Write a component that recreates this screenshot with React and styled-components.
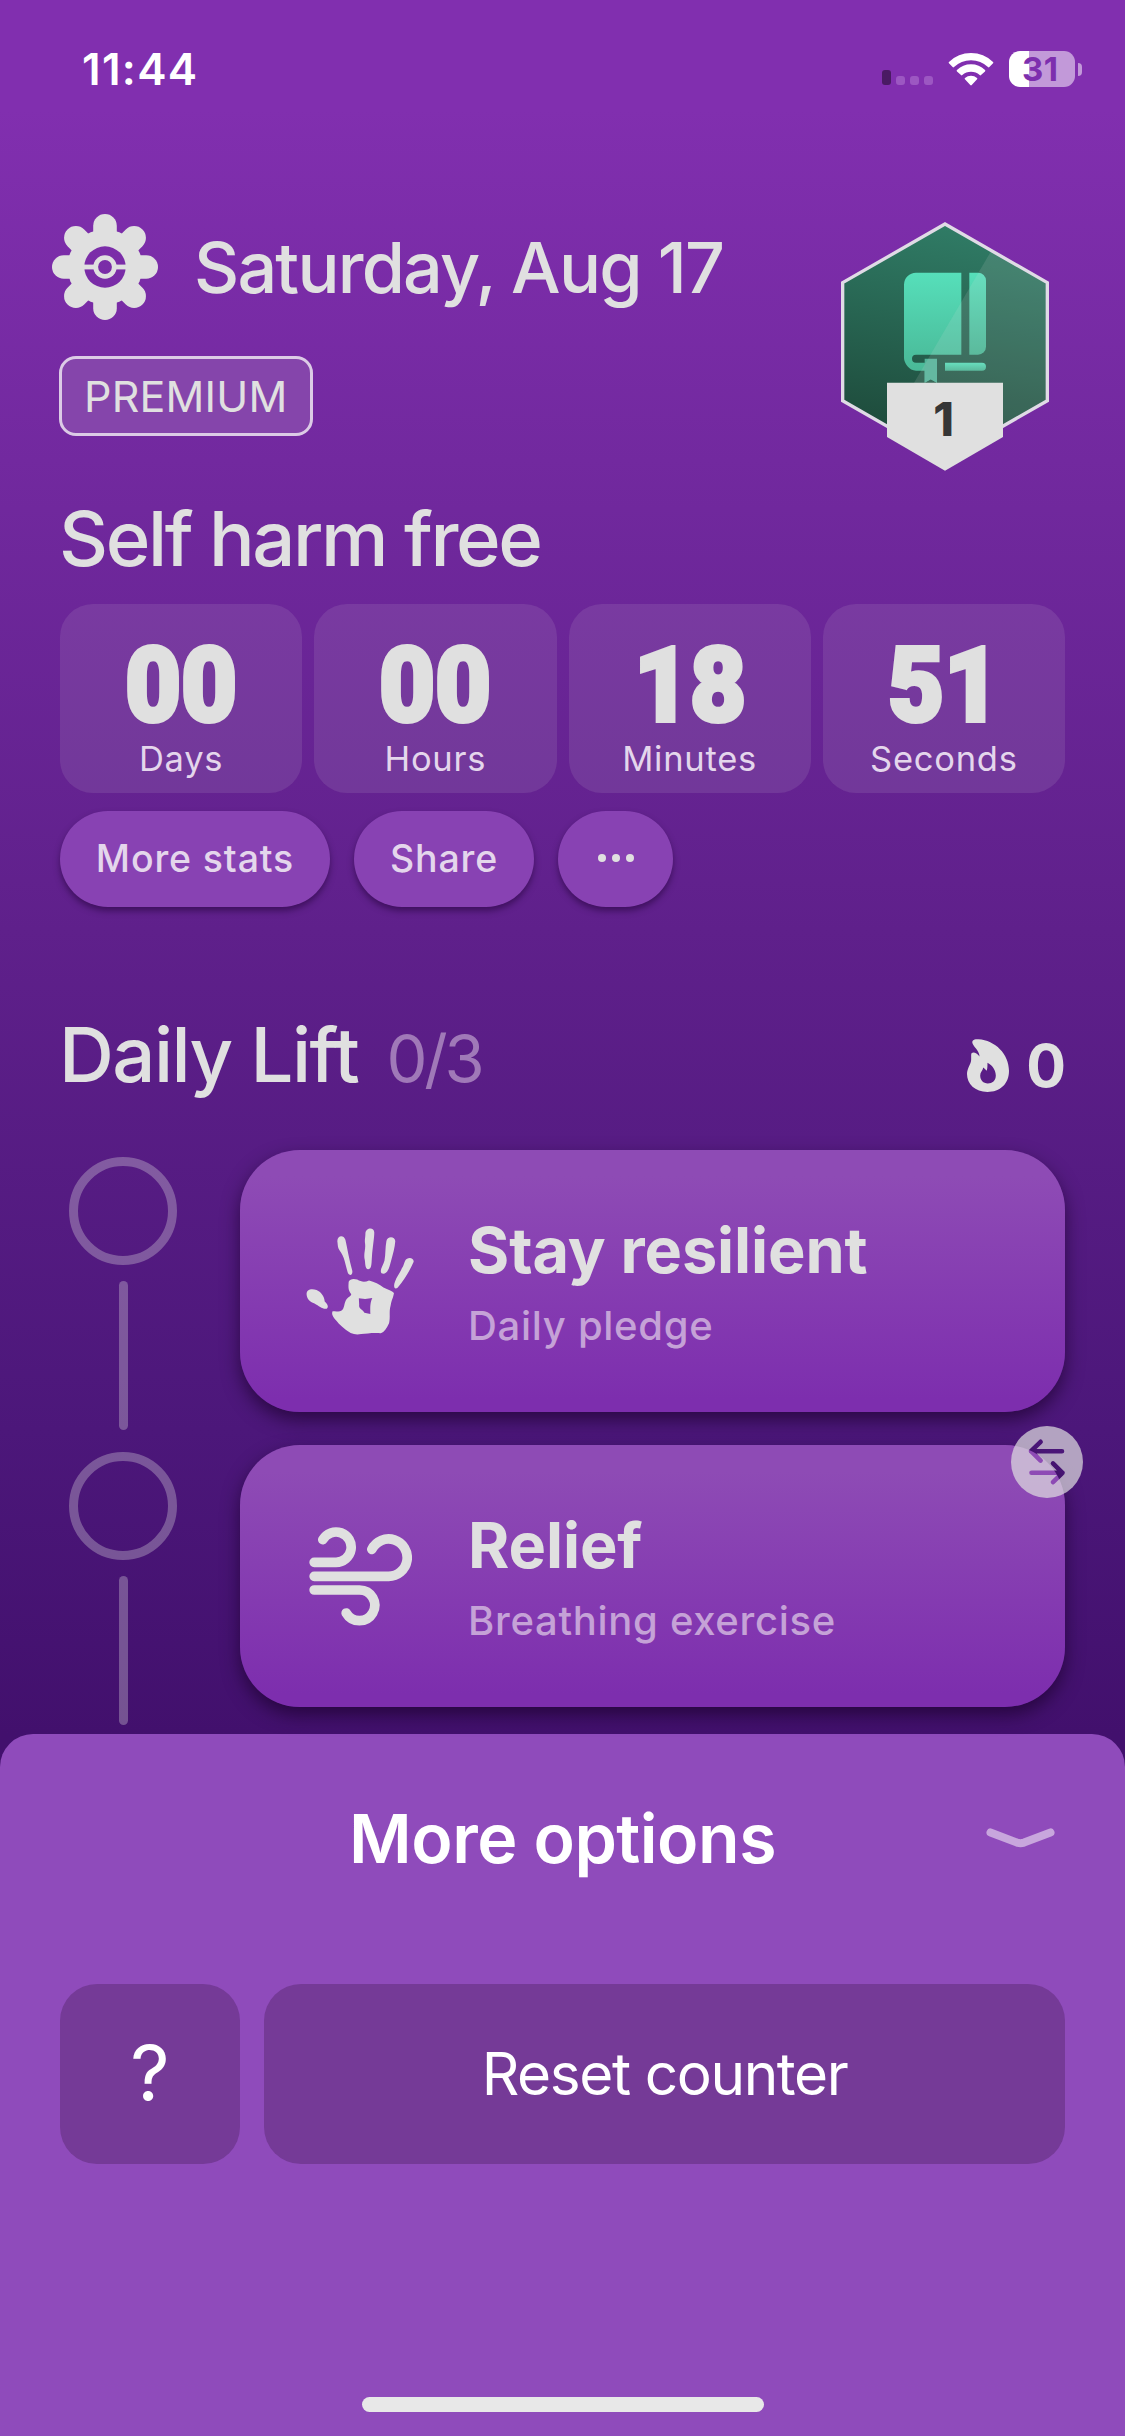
import React from 'react';
import styled, { createGlobalStyle } from 'styled-components';

const INK = '#e0e0e0';

const GlobalStyle = createGlobalStyle`
  * {
    box-sizing: border-box;
  }
  body {
    margin: 0;
    font-family: Inter, 'Liberation Sans', sans-serif;
    color: ${INK};
  }
  h1, h2, h3, p {
    margin: 0;
  }
  button {
    border: none;
    padding: 0 0 2px;
    font-family: inherit;
    color: inherit;
    cursor: pointer;
  }
  svg {
    display: block;
  }
`;

const Screen = styled.div`
  display: flex;
  flex-direction: column;
  width: 1125px;
  height: 2436px;
  overflow: hidden;
  background: linear-gradient(180deg, #812faf 110px, #72299f 460px, #5f208b 930px, #4c177a 1430px, #42106d 1734px);
`;

const Main = styled.main`
  height: 1734px;
  flex: none;
  padding: 0 60px;
`;

const StatusBar = styled.div`
  display: flex;
  align-items: center;
  justify-content: space-between;
  height: 138px;
  margin: 0 -60px;
  padding: 0 43px 0 82px;
  color: #fff;
`;

const Time = styled.span`
  font-size: 44px;
  font-weight: 600;
  letter-spacing: 1.3px;
`;

const StatusIcons = styled.div`
  display: flex;
  align-items: center;
`;

const Signal = styled.div`
  display: flex;
  align-items: flex-end;
  gap: 5px;
  height: 32px;
  margin-right: 15px;
`;

const SignalBar = styled.i`
  width: 9px;
  height: ${props => props.$strong ? '15px' : '9px'};
  border-radius: 3px;
  background: ${props => props.$strong ? '#4a1a63' : '#9c57c2'};
`;

const Battery = styled.div`
  width: 66px;
  height: 36px;
  margin-left: 15px;
  padding-left: 13px;
  border-radius: 11px;
  background: linear-gradient(90deg, #fff 20px, #c299d9 20px);
  color: #7d2fae;
  font-size: 33px;
  font-weight: 700;
  letter-spacing: 0.5px;
  line-height: 37px;
`;

const BatteryTip = styled.i`
  width: 4px;
  height: 13px;
  margin-left: 3px;
  border-radius: 0 4px 4px 0;
  background: #c299d9;
`;

const Header = styled.header`
  display: flex;
  justify-content: space-between;
  align-items: flex-start;
  height: 334px;
  padding-top: 76px;
`;

const TitleRow = styled.div`
  display: flex;
  align-items: center;
  gap: 36px;
  height: 106px;
  margin-left: -8px;
`;

const DateText = styled.h2`
  padding-top: 2px;
  font-size: 70px;
  font-weight: 500;
  letter-spacing: -1.8px;
  line-height: 106px;
`;

const Premium = styled.div`
  width: 254px;
  height: 80px;
  margin: 36px 0 0 -1px;
  padding-left: 22px;
  border: 3px solid #dccbe6;
  border-radius: 17px;
  background: #8545ab;
  font-size: 43px;
  line-height: 74px;
  letter-spacing: 0.2px;
`;

const BadgeWrap = styled.div`
  margin: 8px 16px 0 0;
`;

const SectionTitle = styled.h1`
  margin-left: -1px;
  font-size: 76px;
  font-weight: 500;
  letter-spacing: ${props => props.$tight || '-2.4px'};
  line-height: 92px;
`;

const CounterTitle = styled(SectionTitle)`
  margin-top: 20px;
  margin-bottom: 20px;
`;

const Counter = styled.div`
  display: grid;
  grid-template-columns: repeat(4, 1fr);
  gap: 12px;
`;

const CounterCell = styled.div`
  height: 189px;
  padding-top: 37px;
  border-radius: 33px;
  background: rgba(224, 224, 224, 0.11);
  text-align: center;
`;

const CounterValue = styled.div`
  font-family: Roboto, sans-serif;
  font-size: 103px;
  font-weight: 900;
  line-height: 90px;
  -webkit-text-stroke: 4px ${INK};
  transform: scaleX(0.94);
`;

const CounterLabel = styled.div`
  margin-top: 6px;
  font-size: 34.5px;
  letter-spacing: 0.75px;
  line-height: 44px;
  color: #e4d6ec;
`;

const Pills = styled.div`
  display: flex;
  gap: 24px;
  margin-top: 18px;
`;

const Pill = styled.button`
  display: flex;
  align-items: center;
  justify-content: center;
  gap: 6px;
  width: ${props => props.$width}px;
  height: 96px;
  border-radius: 48px;
  background: #8842b3;
  box-shadow: 0 4px 6px rgba(30, 0, 50, 0.5);
  color: #e4d6ec;
  font-size: 37.5px;
  font-weight: 500;
  letter-spacing: 0.85px;
`;

const Dot = styled.i`
  width: 8px;
  height: 8px;
  border-radius: 50%;
  background: ${INK};
`;

const LiftHeader = styled.div`
  display: flex;
  justify-content: space-between;
  margin-top: 101px;
`;

const LiftTitle = styled.div`
  display: flex;
  align-items: baseline;
  gap: 28px;
`;

const Progress = styled.span`
  font-size: 65px;
  letter-spacing: -3.2px;
  color: #a079b8;
`;

const Streak = styled.div`
  display: flex;
  align-items: center;
  gap: 17px;
  padding-top: 22px;
  font-size: 59px;
  font-weight: 700;
  letter-spacing: -1px;
`;

const Steps = styled.div`
  margin-top: 49px;
`;

const Step = styled.div`
  display: flex;
  height: 295px;
`;

const Rail = styled.div`
  display: flex;
  flex-direction: column;
  align-items: center;
  gap: 16px;
  width: 108px;
  margin: 7px 63px 0 9px;
`;

const RailCircle = styled.div`
  width: 108px;
  height: 108px;
  border: 9px solid rgba(224, 224, 224, 0.32);
  border-radius: 50%;
`;

const RailLine = styled.div`
  width: 9px;
  height: 149px;
  border-radius: 5px;
  background: rgba(224, 224, 224, 0.32);
`;

const StepCard = styled.div`
  position: relative;
  display: flex;
  align-items: center;
  flex: 1;
  height: 262px;
  border-radius: 60px;
  background: linear-gradient(180deg, #8e4bb5 10%, #7d2eae 95%);
  box-shadow: 0 8px 18px rgba(25, 0, 40, 0.65);
`;

const StepIcon = styled.div`
  display: flex;
  justify-content: center;
  width: 108px;
  margin: 0 54px 0 66px;
`;

const StepTitle = styled.h3`
  font-size: 63px;
  font-weight: 700;
  letter-spacing: -0.1px;
  line-height: 76px;
`;

const StepSubtitle = styled.p`
  font-size: 40px;
  font-weight: 500;
  letter-spacing: 0.7px;
  line-height: 50px;
  margin-top: 13px;
  color: #c5a2d7;
`;

const SwapBadge = styled.div`
  position: absolute;
  top: -19px;
  right: -18px;
`;

const Sheet = styled.section`
  display: flex;
  flex-direction: column;
  flex: 1;
  padding: 49px 60px 24px;
  border-radius: 33px 33px 0 0;
  background: #8f4bbb;
  color: #fff;
`;

const SheetHeader = styled.div`
  display: grid;
  grid-template-columns: 1fr auto 1fr;
  align-items: center;
  height: 110px;
`;

const SheetTitle = styled.h2`
  grid-column: 2;
  font-size: 68px;
  font-weight: 600;
  letter-spacing: -0.5px;
`;

const Chevron = styled.svg`
  justify-self: end;
  margin: 0 10px 1px 0;
`;

const SheetActions = styled.div`
  display: grid;
  grid-template-columns: 180px 1fr;
  gap: 24px;
  margin-top: 91px;
`;

const SheetButton = styled.button`
  height: 180px;
  border-radius: 37px;
  background: #753a97;
  color: #fff;
  font-size: ${props => props.$size || '58.5px'};
  letter-spacing: ${props => props.$size ? '0' : '-1.4px'};
`;

const HomeIndicator = styled.div`
  width: 402px;
  height: 15px;
  margin: auto auto 0;
  border-radius: 8px;
  background: #e8e8e8;
`;

const WifiIcon = () => (
  <svg width="46" height="34" viewBox="384 154 138 102" fill="#fff" stroke="#fff" strokeWidth="6" strokeLinejoin="round">
    <path d="M389 186 A92 92 0 0 1 517 186 L506 197 A76 76 0 0 0 400 197Z" />
    <path d="M413 210 A58 58 0 0 1 493 210 L481 221 A42 42 0 0 0 425 221Z" />
    <path d="M437 234 A24 24 0 0 1 469 234 L453 251Z" />
  </svg>
);

const GearIcon = () => (
  <svg width="106" height="106" viewBox="-53 -53 106 106">
    <mask id="gearMask">
      <rect x="-53" y="-53" width="106" height="106" fill="#fff" />
      <circle r="20.7" fill="#000" />
      <rect x="-21" y="-2.4" width="42" height="4.8" fill="#fff" />
      <circle r="11.7" fill="#fff" />
      <circle r="6.9" fill="#000" />
    </mask>
    <g fill={INK} mask="url(#gearMask)">
      <circle r="37.5" />
      {[0, 45, 90, 135].map(a => (
        <rect key={a} x="-11.8" y="-53" width="23.6" height="106" rx="11.8" transform={`rotate(${a})`} />
      ))}
    </g>
  </svg>
);

const BadgeIcon = () => (
  <svg width="208" height="249" viewBox="123 97 624 747">
    <defs>
      <linearGradient id="hex" x1="0.55" y1="0" x2="0.4" y2="1">
        <stop offset="0" stopColor="#307c66" />
        <stop offset="1" stopColor="#1c4637" />
      </linearGradient>
      <linearGradient id="book" x1="0" y1="0" x2="0" y2="1">
        <stop offset="0" stopColor="#56dfba" />
        <stop offset="1" stopColor="#48b493" />
      </linearGradient>
    </defs>
    <path d="M435 103 L742 279 V633 L435 809 L128 633 V279Z" fill="url(#hex)" />
    <g fill="url(#book)">
      <path d="M348 249 H484 V495 H348 A12 12 0 0 0 348 519 H411 V579 L392 569 L374 579 V543 H348 C328 543 312 520 312 505 V285 A36 36 0 0 1 348 249Z" />
      <path d="M508 249 H534 A24 24 0 0 1 558 273 V471 A24 24 0 0 1 534 495 H508Z" />
      <path d="M435 519 H546 A12 12 0 0 1 546 543 H435Z" />
    </g>
    <path d="M374 507 H411 V579 L392 569 L374 579Z" fill="#52b398" />
    <path d="M574 183 L742 279 V633 L435 809 L330 600Z" fill="#e0e0e0" fillOpacity="0.13" />
    <path d="M435 103 L742 279 V633 L435 809 L128 633 V279Z" fill="none" stroke="#e0dbe6" strokeWidth="10" />
    <path d="M261 579 H609 V742 L435 843 L261 742Z" fill={INK} />
    <text x="431" y="738" textAnchor="middle" fontSize="141" fontWeight="800" fill="#363636">1</text>
  </svg>
);

const FlameIcon = () => (
  <svg width="42" height="53" viewBox="1181 176 121 160" preserveAspectRatio="none">
    <path
      fill={INK}
      fillRule="evenodd"
      d="M1198 192 C1193 181 1200 176 1214 177 C1262 180 1302 222 1302 272 C1302 312 1276 336 1240 336 C1204 336 1181 312 1181 282 C1181 264 1193 252 1193 238 V224 C1193 214 1207 214 1217 229 C1217 214 1206 206 1198 192Z
         M1240 248 C1256 256 1264 274 1264 286 C1264 302 1254 310 1241 310 C1228 310 1219 300 1219 286 C1219 276 1226 272 1228 262 L1238 272 C1240 264 1240 256 1240 248Z"
    />
  </svg>
);

const HandIcon = () => (
  <svg width="110" height="109" viewBox="44 50 329 326" fill={INK}>
    <path d="M140 94 C136 74 158 68 164 86 C170 112 174 140 185 180 C187 192 179 198 172 188 C164 164 162 138 146 118 C141 110 141 104 140 94Z" />
    <path d="M225 66 C226 48 252 46 252 64 C252 80 247 110 245 135 C243 160 245 172 234 176 C222 174 226 156 222 142 C220 125 226 115 224 98 C222 85 225 80 225 66Z" />
    <path d="M289 90 C291 74 315 74 316 90 C315 108 309 130 301 158 C295 184 285 193 274 188 C267 178 279 165 283 150 C287 130 285 110 289 90Z" />
    <path d="M346 150 C352 137 373 139 372 153 C361 178 346 205 323 232 C312 239 310 226 315 214 C321 196 330 188 336 173 C342 165 342 158 346 150Z" />
    <path d="M46 254 C44 236 62 234 76 239 C92 246 100 260 101 274 C110 282 114 291 107 296 C94 298 84 288 70 280 C54 274 48 266 46 254Z" />
    <path
      fillRule="evenodd"
      d="M174 214 C178 204 190 204 200 207 C212 214 222 216 236 210 C252 214 268 222 280 231 C294 238 306 241 312 248 C310 262 305 268 302 285 C296 305 302 320 297 340 C290 356 282 366 272 371 C250 368 230 372 212 373 C200 376 190 374 180 370 C160 358 146 345 136 332 C126 322 121 312 125 304 C136 304 148 306 155 299 C162 290 160 276 168 266 C174 260 181 258 182 252 C172 240 173 230 174 214Z
         M205 264 L224 266 L246 263 C238 280 240 295 240 312 L222 308 C214 296 204 296 206 284Z"
    />
  </svg>
);

const WindIcon = () => (
  <svg width="103" height="99" viewBox="836 380 308 297" fill="none" stroke={INK} strokeWidth="29" strokeLinecap="round">
    <path d="M851 486 H916.5 A45.5 45.5 0 1 0 877 418" />
    <path d="M851 528 H1073 A56 56 0 1 0 1024 447" />
    <path d="M851 569 H987 A46 46 0 1 1 947 638" />
  </svg>
);

const SwapIcon = () => (
  <svg width="72" height="72" viewBox="0 0 72 72">
    <mask id="swapMask">
      <circle cx="36" cy="36" r="36" fill="#fff" />
      <g fill="none" stroke="#000" strokeWidth="4.6" strokeLinecap="round" strokeLinejoin="round">
        <path d="M51 25.2 H20 M29.6 15.8 L20 25.2 L29.6 34.6" />
        <path d="M20.5 46.8 H51.5 M42 37.4 L51.5 46.8 L42 56.2" />
      </g>
    </mask>
    <rect width="72" height="72" fill={INK} fillOpacity="0.7" mask="url(#swapMask)" />
  </svg>
);

const counter = [
  { value: '00', label: 'Days' },
  { value: '00', label: 'Hours' },
  { value: '18', label: 'Minutes' },
  { value: '51', label: 'Seconds' },
];

const steps = [
  { title: 'Stay resilient', subtitle: 'Daily pledge', icon: <HandIcon /> },
  { title: 'Relief', subtitle: 'Breathing exercise', icon: <WindIcon />, swappable: true },
];

const App = () => {
  return (
    <Screen>
      <GlobalStyle />
      <Main>
        <StatusBar>
          <Time>11:44</Time>
          <StatusIcons>
            <Signal>
              <SignalBar $strong />
              <SignalBar />
              <SignalBar />
              <SignalBar />
            </Signal>
            <WifiIcon />
            <Battery>31</Battery>
            <BatteryTip />
          </StatusIcons>
        </StatusBar>

        <Header>
          <div>
            <TitleRow>
              <GearIcon />
              <DateText>Saturday, Aug 17</DateText>
            </TitleRow>
            <Premium>PREMIUM</Premium>
          </div>
          <BadgeWrap>
            <BadgeIcon />
          </BadgeWrap>
        </Header>

        <CounterTitle>Self harm free</CounterTitle>
        <Counter>
          {counter.map(cell => (
            <CounterCell key={cell.label}>
              <CounterValue>{cell.value}</CounterValue>
              <CounterLabel>{cell.label}</CounterLabel>
            </CounterCell>
          ))}
        </Counter>

        <Pills>
          <Pill $width={270}>More stats</Pill>
          <Pill $width={180}>Share</Pill>
          <Pill $width={115} aria-label="More">
            <Dot />
            <Dot />
            <Dot />
          </Pill>
        </Pills>

        <LiftHeader>
          <LiftTitle>
            <SectionTitle as="h2" $tight="-1.55px">Daily Lift</SectionTitle>
            <Progress>0/3</Progress>
          </LiftTitle>
          <Streak>
            <FlameIcon />
            0
          </Streak>
        </LiftHeader>

        <Steps>
          {steps.map(step => (
            <Step key={step.title}>
              <Rail>
                <RailCircle />
                <RailLine />
              </Rail>
              <StepCard>
                <StepIcon>{step.icon}</StepIcon>
                <div>
                  <StepTitle>{step.title}</StepTitle>
                  <StepSubtitle>{step.subtitle}</StepSubtitle>
                </div>
                {step.swappable && (
                  <SwapBadge>
                    <SwapIcon />
                  </SwapBadge>
                )}
              </StepCard>
            </Step>
          ))}
        </Steps>
      </Main>

      <Sheet>
        <SheetHeader>
          <SheetTitle>More options</SheetTitle>
          <Chevron width="69" height="20" viewBox="0 0 69 20" fill="none" stroke="#c8a6dd" strokeWidth="8" strokeLinecap="round" strokeLinejoin="round">
            <path d="M4.5 4.5 L31 14.6 Q34.5 15.8 38 14.6 L64.5 4.5" />
          </Chevron>
        </SheetHeader>
        <SheetActions>
          <SheetButton $size="77px">?</SheetButton>
          <SheetButton>Reset counter</SheetButton>
        </SheetActions>
        <HomeIndicator />
      </Sheet>
    </Screen>
  );
};

export default App;
